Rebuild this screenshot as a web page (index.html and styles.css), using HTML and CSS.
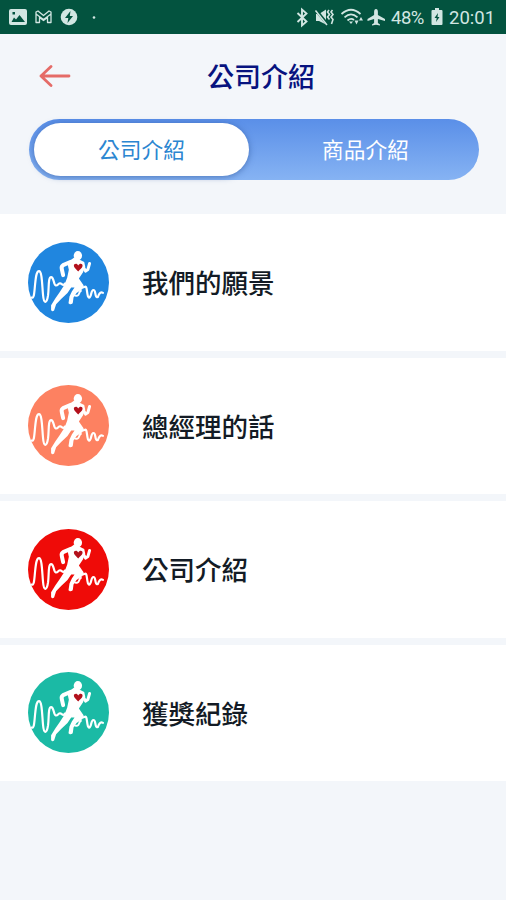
FILE: index.html
```
<!DOCTYPE html>
<html lang="zh-Hant">
<head>
	<meta charset="utf-8">
	<title>公司介紹</title>
	<link rel="stylesheet" href="styles.css">
</head>
<body>
	<!-- runner logo, reused in every row -->
	<svg class="defs" width="0" height="0">
		<symbol id="runner" viewBox="26 21 242 242">
			<circle cx="147" cy="142" r="121" fill="currentColor"/>
			<g fill="none" stroke="#fff" stroke-linecap="round" stroke-linejoin="round">
				<path stroke-width="6.500" d="M36 187C43 190 44 181 46 160C49 125 51 108 59 108C68 108 68 150 71 180C73 205 82 208 86 180C89 155 86 126 95 126C104 126 102 149 109 151C116 152 118 141 124 145C129 148 131 153 137 145"/>
				<path stroke-width="6.500" d="M184 150C190 158 190 158 195 155C203 151 201 170 205 183C209 191 213 186 215 175C218 161 225 161 227 174C229 190 235 188 237 180C240 172 244 170 250 173"/>
				<path stroke-width="12" d="M154 80L131 90Q125 94 127 102L131 120"/>
				<path stroke-width="9" d="M187 88L198 108L205 103L210 85"/>
				<path stroke-width="6" d="M168 162C156 174 161 184 174 181C180 179 178 170 184 167"/>
			</g>
			<g fill="#fff">
				<ellipse cx="175" cy="62" rx="12.500" ry="14"/>
				<path d="M163 68L179 73L194 81L197 95L190 112L178 130L192 150Q194 156 188 162L171 173L162 187L160 202Q160 208 151 207L147 204L150 184L157 169L165 157L155 157L144 173L125 191L110 207L104 226Q98 231 95 224L95 210L108 189L120 172L135 149L143 128L148 104L144 85L152 76Z"/>
			</g>
			<path fill="#b3111c" d="M176 109C169 102 163 97 163 92C163 85 173 84 176 91C180 84 190 85 189 93C188 99 181 103 176 109Z"/>
		</symbol>
	</svg>

	<div class="statusbar">
		<svg class="notifications" width="100" height="34" viewBox="0 0 100 34">
			<path fill="#d2e6e2" fill-rule="evenodd" d="M11 9H25Q27 9 27 11V23Q27 25 25 25H11Q9 25 9 23V11Q9 9 11 9ZM11.500 22H25L19.500 15L16 19.500L14 17.500ZM12.500 12V14.500H15V12Z"/>
			<path fill="none" stroke="#d2e6e2" stroke-width="1.300" stroke-linejoin="round" d="M36 12L38 11L43.500 15.500L49 11L51 12V22.500H47.500V17.500L43.500 20.500L39.500 17.500V22.500H36ZM36 14L43.500 19.500L51 14"/>
			<circle cx="69" cy="17" r="8.300" fill="#d2e6e2"/>
			<path fill="#03533f" d="M70.500 11L65 18H68.300L67.500 23L73 16H69.800Z"/>
			<circle cx="94" cy="17.500" r="1.300" fill="#d2e6e2"/>
		</svg>
		<div class="system">
			<svg width="92" height="34" viewBox="295 0 92 34">
				<path fill="none" stroke="#d2e6e2" stroke-width="1.900" d="M298.500 13L307.500 21.500L303 25.500V9.500L307.500 13.500L298.500 22"/>
				<path fill="#d2e6e2" d="M317 14H320L327 9.500V24.500L320 21H317Z"/>
				<path stroke="#03533f" stroke-width="3" d="M317 10L329 25"/>
				<path stroke="#d2e6e2" stroke-width="1.500" d="M316.500 10.500L328 25"/>
				<path fill="none" stroke="#d2e6e2" stroke-width="1.600" d="M330 10L328.500 12L330.500 14.500L328.500 17L330.500 19.500M333.500 10L332 12L334 14.500L332 17L334 19.500L332.500 24"/>
				<path fill="none" stroke="#d2e6e2" stroke-width="1.800" d="M342.500 14Q352 5.500 361.500 14M345.500 17.300Q352 11.500 358.500 17.300M348.500 20.500Q352 17.500 355 20"/>
				<path fill="#d2e6e2" d="M350 21.500H354L352 24ZM355.500 20.500H359.500L357.500 24.500ZM360 20.500L362 17L364 20.500Z"/>
				<path fill="#d2e6e2" d="M377 9Q378.900 9 378.900 12V15L386 19V21L378.900 19V23L381 24.500V25.500L377 24.700L373 25.500V24.500L375.100 23V19L368.500 21V19L375.100 15V12Q375.100 9 377 9Z"/>
			</svg>
			<span class="battery">48%</span>
			<svg class="battery-icon" width="12" height="18" viewBox="0 0 12 18">
				<path fill="#d2e6e2" d="M4 0H8V2H10.500Q11.500 2 11.500 3V16Q11.500 17 10.500 17H1.500Q.5 17 .5 16V3Q.5 2 1.500 2H4Z"/>
				<path fill="#03533f" d="M7 5L3.500 10H5.700L5 14L8.500 9H6.500Z"/>
			</svg>
			<span class="clock">20:01</span>
		</div>
	</div>

	<div class="header">
		<svg class="back" width="32" height="22" viewBox="0 0 32 22">
			<path d="M12 1.500L2 11L12 20.500M2 11H30"/>
		</svg>
		<h1>公司介紹</h1>
	</div>

	<div class="tabs">
		<div class="tab active">公司介紹</div>
		<div class="tab">商品介紹</div>
	</div>

	<div class="list">
		<div class="row">
			<svg class="icon blue"><use href="#runner"/></svg>
			<span>我們的願景</span>
		</div>
		<div class="row">
			<svg class="icon orange"><use href="#runner"/></svg>
			<span>總經理的話</span>
		</div>
		<div class="row">
			<svg class="icon red"><use href="#runner"/></svg>
			<span>公司介紹</span>
		</div>
		<div class="row">
			<svg class="icon green"><use href="#runner"/></svg>
			<span>獲獎紀錄</span>
		</div>
	</div>
</body>
</html>
```
FILE: styles.css
```
* {
	box-sizing: border-box;
}

body {
	margin: 0;
	min-height: 900px;
	background-color: #f3f6fa;
	font-family: "Noto Sans CJK TC", sans-serif;
}

.defs {
	display: block;
}

.statusbar {
	display: flex;
	justify-content: space-between;
	height: 34px;
	padding-right: 11px;
	background-color: #03533f;
	color: #d2e6e2;
	font-family: Roboto, sans-serif;
}

.system {
	display: flex;
	align-items: center;
}

.battery {
	width: 35px;
	margin-left: 5px;
	font-size: 18.5px;
	letter-spacing: -0.5px;
	padding-top: 2px;
}

.battery-icon {
	margin: 0 6px 0 5px;
}

.clock {
	font-size: 18.5px;
	width: 46px;
	padding-top: 2px;
	white-space: nowrap;
}

.header {
	display: flex;
	align-items: center;
	height: 85px;
	padding: 0 0 1px 39px;
}

.back {
	fill: none;
	stroke: #e56b67;
	stroke-width: 2.8;
	stroke-linecap: round;
	stroke-linejoin: round;
}

h1 {
	margin: 0 0 0 136px;
	color: #07137f;
	font-size: 27px;
	font-weight: 500;
	line-height: 40px;
}

.tabs {
	display: flex;
	width: 450px;
	height: 61px;
	margin-left: 29px;
	padding: 4px 5px;
	border-radius: 31px;
	background: linear-gradient(#5a8fe8, #86b3f3);
}

.tab {
	flex: 1;
	padding-left: 8px;
	color: #fff;
	font-size: 21.7px;
	line-height: 52px;
	text-align: center;
}

.tab.active {
	flex: 0 0 215px;
	padding-left: 0;
	border-radius: 27px;
	background-color: #fff;
	box-shadow: 0 1px 6px rgba(40, 80, 150, 0.6);
	color: #2b86d1;
}

.list {
	display: grid;
	grid-template-rows: repeat(4, 136.5px);
	gap: 7px;
	margin-top: 34px;
}

.row {
	display: flex;
	align-items: center;
	padding-left: 28px;
	background-color: #fff;
	color: #131b25;
	font-size: 26.5px;
	font-weight: 500;
}

.row span {
	padding-bottom: 1px;
}

.icon {
	width: 81px;
	height: 81px;
	margin-right: 33px;
}

.blue { color: #2086df; }
.orange { color: #fd8161; }
.red { color: #ef0b08; }
.green { color: #1bbaa5; }
```
